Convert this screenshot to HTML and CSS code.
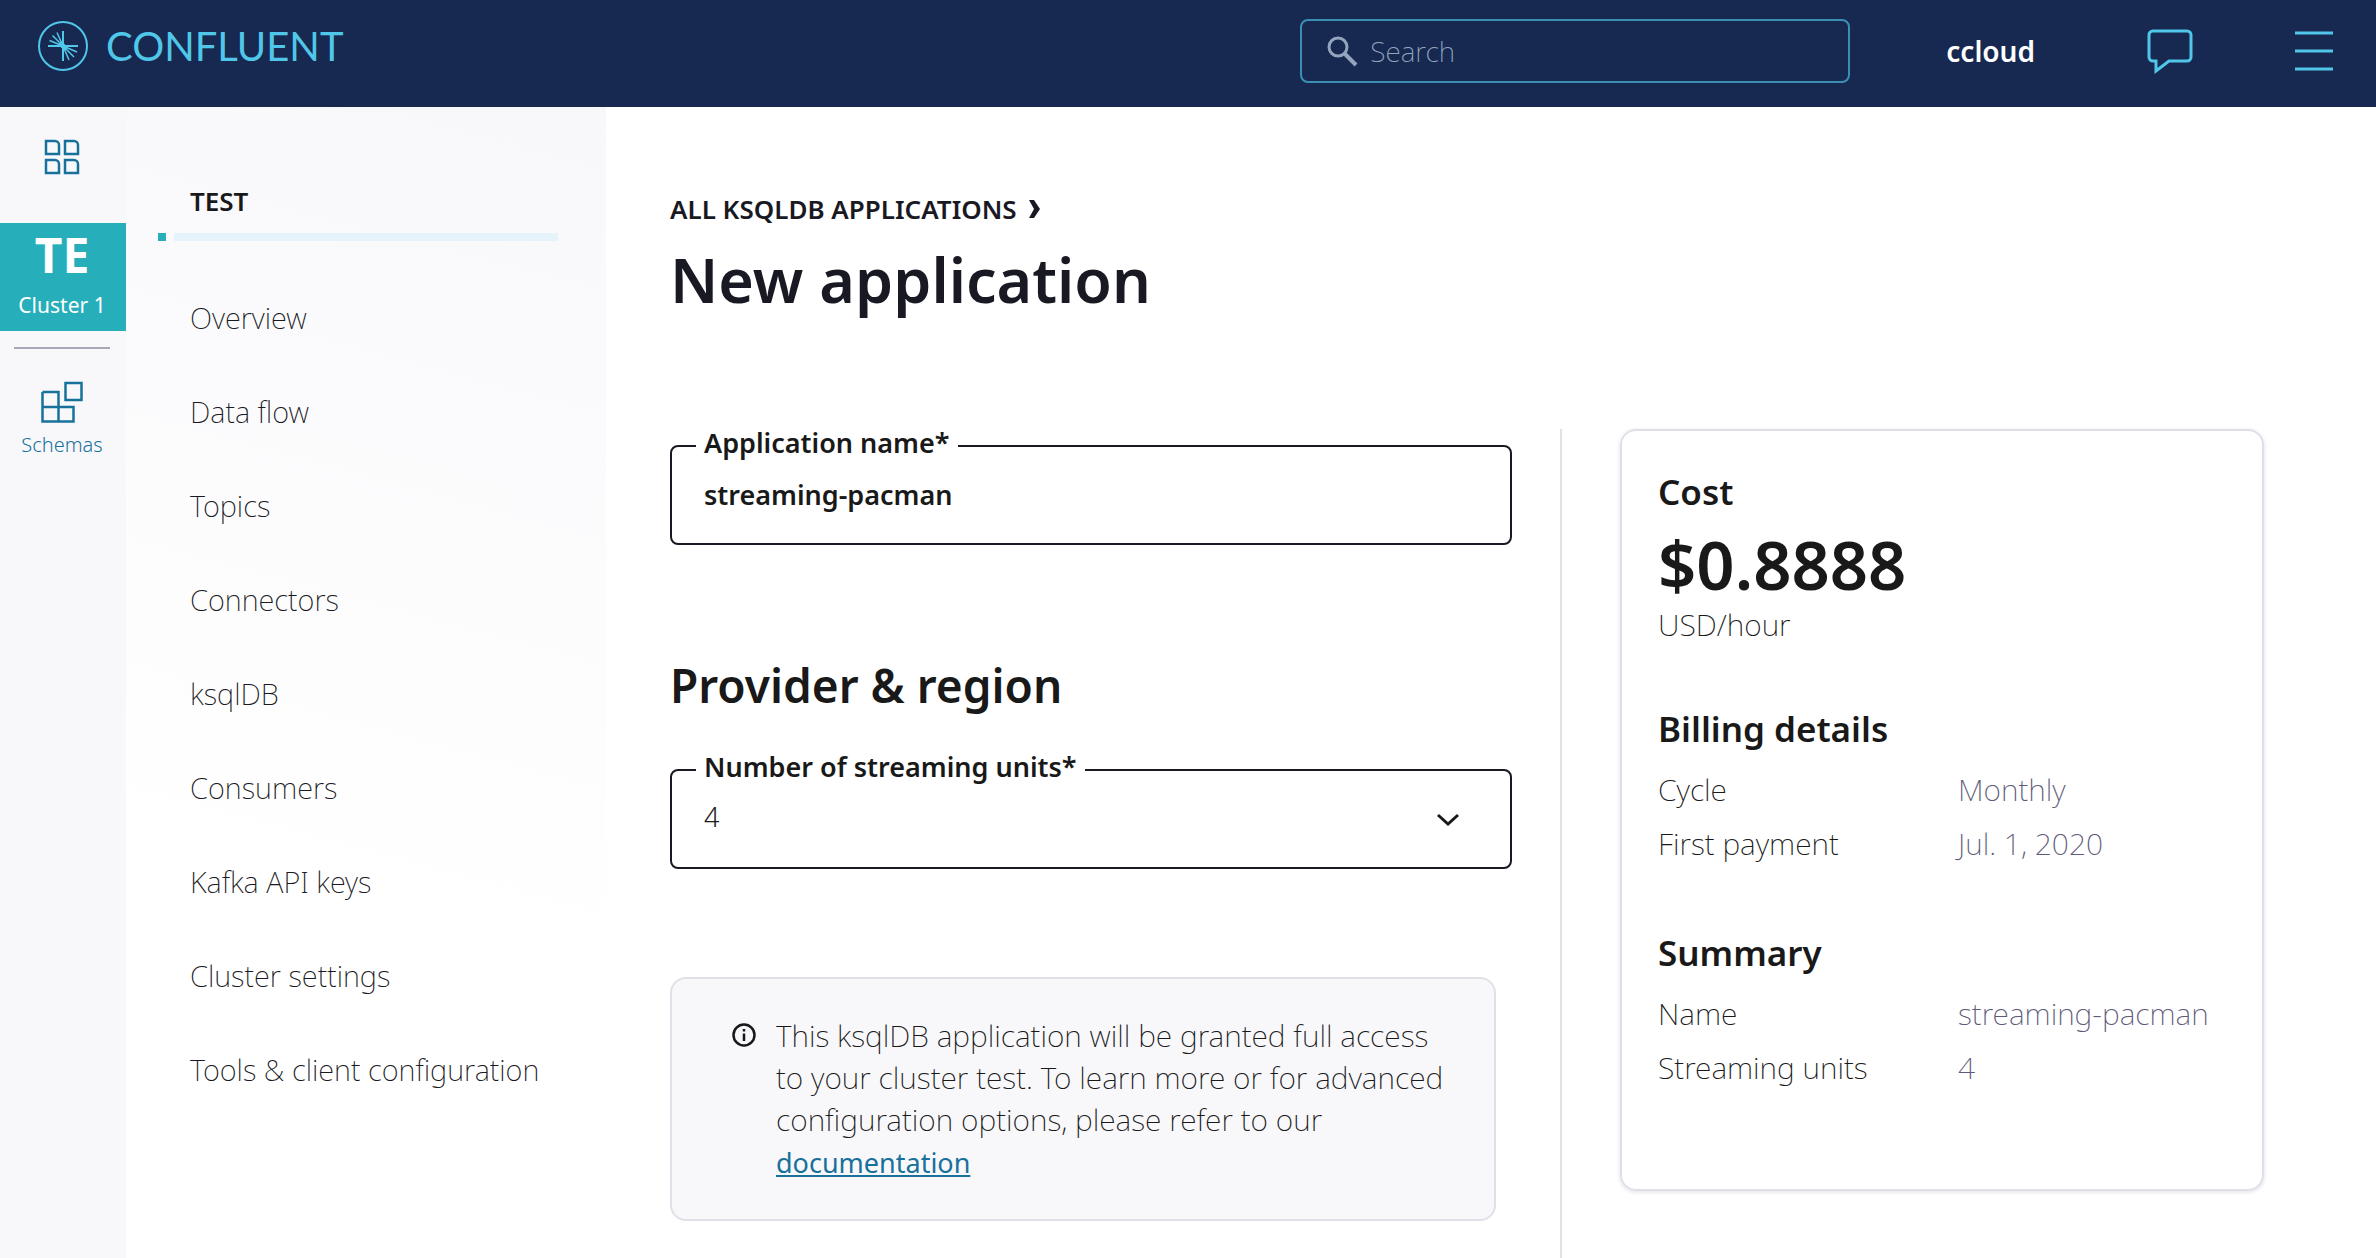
FILE: index.html
```html
<!DOCTYPE html>
<html lang="en">
<head>
<meta charset="utf-8">
<title>New application</title>
<link rel="stylesheet" href="styles.css">
</head>
<body>
<header class="topbar">
  <a class="brand" href="#">
    <svg class="brand-mark" viewBox="0 0 50 50" fill="none" stroke="currentColor" stroke-width="2" aria-hidden="true">
      <circle cx="25" cy="25" r="24"/>
      <path d="M25 10v30M10 25h30"/>
      <path d="M25 25L19 11.500M25 25L14.500 14.500M25 25L11.500 19.500M25 25L31 39M25 25L36 36M25 25L39 31" stroke-width="1.500"/>
      <path d="M22 22L28 28" stroke-width="5"/>
    </svg>
    <span class="brand-name">CONFLUENT</span>
  </a>
  <label class="search">
    <svg class="search-icon" viewBox="0 0 32 32" fill="none" stroke="currentColor" stroke-width="3" aria-hidden="true"><circle cx="12" cy="12" r="9"/><path d="M18.500 18.500L30 30" stroke-width="4"/></svg>
    <input class="search-input" type="search" placeholder="Search" aria-label="Search">
  </label>
  <a class="account" href="#">ccloud</a>
  <button class="icon-button chat" type="button" aria-label="Chat">
    <svg viewBox="0 0 46 46" width="46" height="46" fill="none" stroke="currentColor" stroke-width="3"><path d="M6 3h34a4 4 0 0 1 4 4v22a4 4 0 0 1-4 4H22L9 43V33H6a4 4 0 0 1-4-4V7a4 4 0 0 1 4-4z"/></svg>
  </button>
  <button class="icon-button menu-toggle" type="button" aria-label="Menu">
    <svg viewBox="0 0 38 40" width="38" height="40" fill="none" stroke="currentColor" stroke-width="3"><path d="M0 2h38M0 20h38M0 38h38"/></svg>
  </button>
</header>
<div class="layout">
  <nav class="rail" aria-label="Environment">
    <a class="rail-home" href="#" aria-label="Home">
      <svg viewBox="0 0 36 36" width="36" height="36" fill="none" stroke="currentColor" stroke-width="2.500"><path d="M2 2h9a4 4 0 0 1 4 4v9H2zM21 2h9a4 4 0 0 1 4 4v9H21zM2 21h9a4 4 0 0 1 4 4v9H2zM21 21h9a4 4 0 0 1 4 4v9H21z"/></svg>
    </a>
    <a class="rail-cluster" href="#"><span class="rail-initials">TE</span><span>Cluster 1</span></a>
    <hr class="rail-divider">
    <a class="rail-schemas" href="#">
      <svg viewBox="0 0 42 42" width="42" height="42" fill="none" stroke="currentColor" stroke-width="2.500"><path d="M1.500 11h16v29.500M1.500 26h31v14.500h-31V11M24.500 2h16v17h-16z"/></svg>
      <span>Schemas</span>
    </a>
  </nav>
  <nav class="sidebar" aria-label="Cluster">
    <h2 class="sidebar-title">TEST</h2>
    <div class="progress"><span class="progress-dot"></span><span class="progress-track"></span></div>
    <ul class="menu">
      <li><a href="#">Overview</a></li>
      <li><a href="#">Data flow</a></li>
      <li><a href="#">Topics</a></li>
      <li><a href="#">Connectors</a></li>
      <li><a href="#">ksqlDB</a></li>
      <li><a href="#">Consumers</a></li>
      <li><a href="#">Kafka API keys</a></li>
      <li><a href="#">Cluster settings</a></li>
      <li><a href="#">Tools &amp; client configuration</a></li>
    </ul>
  </nav>
  <main class="content">
    <a class="crumb" href="#">ALL KSQLDB APPLICATIONS
      <svg viewBox="0 0 12 18" width="12" height="18" fill="currentColor" aria-hidden="true"><path d="M0 0h5l6 9-6 9H0l5-9z"/></svg>
    </a>
    <h1 class="title">New application</h1>
    <div class="columns">
      <form class="form">
        <fieldset class="field">
          <legend><label for="app-name">Application name*</label></legend>
          <input id="app-name" class="control" type="text" value="streaming-pacman">
        </fieldset>
        <h2 class="section-title">Provider &amp; region</h2>
        <fieldset class="field">
          <legend><label for="units">Number of streaming units*</label></legend>
          <div class="select-row">
            <select id="units" class="control control-select"><option>4</option></select>
            <svg class="chevron" viewBox="0 0 24 14" width="24" height="14" fill="none" stroke="currentColor" stroke-width="3" aria-hidden="true"><path d="M2 2l10 9L22 2"/></svg>
          </div>
        </fieldset>
        <div class="notice">
          <svg class="notice-icon" viewBox="0 0 24 24" width="24" height="24" fill="none" stroke="currentColor" stroke-width="2.500" aria-hidden="true"><circle cx="12" cy="12" r="10.500"/><path d="M12 10.500V18M12 6v2.500"/></svg>
          <p class="notice-text">This ksqlDB application will be granted full access to your cluster test. To learn more or for advanced configuration options, please refer to our <a href="#">documentation</a></p>
        </div>
      </form>
      <aside class="aside">
        <section class="card">
          <h3>Cost</h3>
          <p class="price">$0.8888</p>
          <p class="unit">USD/hour</p>
          <h3>Billing details</h3>
          <dl class="facts">
            <dt>Cycle</dt><dd>Monthly</dd>
            <dt>First payment</dt><dd>Jul. 1, 2020</dd>
          </dl>
          <h3>Summary</h3>
          <dl class="facts">
            <dt>Name</dt><dd>streaming-pacman</dd>
            <dt>Streaming units</dt><dd>4</dd>
          </dl>
        </section>
      </aside>
    </div>
  </main>
</div>
</body>
</html>
```
FILE: styles.css
```css
* { box-sizing: border-box; }

body {
  margin: 0;
  min-height: 100vh;
  display: flex;
  flex-direction: column;
  font-family: "Noto Sans", "Open Sans", sans-serif;
  font-size: 28px;
  font-weight: 300;
  line-height: 42px;
  color: #191919;
  background: #fff;
}

h1, h2, h3, p, ul, dl, dd { margin: 0; padding: 0; }
a { color: inherit; text-decoration: none; }
svg { display: block; flex: none; }
input, select, button { font: inherit; color: inherit; }

.topbar {
  display: flex;
  align-items: center;
  height: 107px;
  padding: 0 43px 5px 38px;
  background: #172950;
  color: #50c6e8;
}
.brand { display: flex; align-items: center; gap: 18px; margin-right: auto; padding-bottom: 10px; }
.brand-mark { width: 50px; height: 50px; }
.brand-name { font-family: Lato, sans-serif; font-size: 40px; font-weight: 400; }

.search {
  display: flex;
  align-items: center;
  gap: 12px;
  width: 550px;
  height: 64px;
  padding: 0 24px;
  border: 2px solid #3a8fb3;
  border-radius: 8px;
  color: #92a5bd;
}
.search-icon { width: 32px; height: 32px; }
.search-input { flex: 1; min-width: 0; padding: 0; border: 0; outline: 0; background: none; font-weight: 200; }
.search-input::placeholder { color: #92a5bd; opacity: 1; }
.account { margin-left: 96px; font-size: 28px; font-weight: 600; color: #fff; }
.icon-button { padding: 0; border: 0; background: none; color: #50c6e8; }
.chat { margin-left: 112px; }
.menu-toggle { margin-left: 102px; }

.layout { flex: 1; display: flex; }

.rail { width: 126px; background: #f8f8fb; font-size: 20px; line-height: 28px; color: #17719b; text-align: center; }
.rail a { display: flex; flex-direction: column; align-items: center; padding-right: 2px; }
.rail .rail-home { padding-top: 32px; padding-bottom: 48px; }
.rail-cluster { height: 108px; background: #26afba; color: #fff; font-size: 21px; font-weight: 400; }
.rail-initials { margin-bottom: 4px; font-size: 48px; font-weight: 700; line-height: 64px; }
.rail-divider { margin: 16px 16px 32px 14px; border: 0; border-top: 2px solid #a9a6b8; }
.rail-schemas { gap: 8px; }

.sidebar {
  width: 480px;
  padding: 72px 48px 0 32px;
  background: linear-gradient(195deg, #f8f8fb 0%, #fff 68%);
}
.sidebar-title { padding-left: 32px; font-size: 26px; font-weight: 600; line-height: 44px; }
.progress { display: flex; gap: 8px; margin-top: 10px; }
.progress-dot { width: 8px; height: 8px; background: #26afba; }
.progress-track { flex: 1; height: 8px; background: #e5f4fb; }
.menu { display: grid; gap: 52px; margin-top: 56px; padding-left: 32px; list-style: none; font-size: 29px; font-weight: 200; color: #191924; white-space: nowrap; }

.content { flex: 1; display: flex; flex-direction: column; min-width: 0; padding: 82px 112px 0 64px; }
.crumb { display: flex; align-items: center; gap: 12px; font-size: 26px; font-weight: 600; line-height: 40px; color: #191924; }
.title { margin-top: 9px; font-size: 61px; font-weight: 600; line-height: 84px; color: #191924; }
.columns { flex: 1; display: grid; grid-template-columns: 421fr 352fr; gap: 48px; margin-top: 107px; }

.field { min-width: 0; height: 116px; margin: 0; padding: 0 32px; border: 2px solid #191924; border-radius: 8px; font-size: 27px; }
.field legend { margin-left: -8px; padding: 0 8px 6px; font-weight: 600; line-height: 28px; }
.control { display: block; width: 100%; height: 52px; margin-top: 5px; padding: 0; border: 0; outline: 0; background: none; font-weight: 600; }
.select-row { display: flex; align-items: center; margin-top: 4px; padding-right: 18px; }
.control-select { appearance: none; margin-top: 0; font-weight: 300; }
.chevron { margin-top: 6px; }
.section-title { margin: 106px 0 34px; font-size: 46px; font-weight: 600; line-height: 68px; }
.notice { display: flex; gap: 20px; margin: 108px 16px 0 0; padding: 36px 40px 36px 60px; border: 2px solid #e0e0e8; border-radius: 16px; background: #f8f8fb; }
.notice-icon { margin-top: 8px; }
.notice-text { font-size: 30px; font-weight: 200; }
.notice-text a { font-size: 27px; font-weight: 400; line-height: 36px; color: #17719b; text-decoration: underline; }

.aside { padding-left: 58px; border-left: 2px solid #e0e0e8; }
.card { min-height: 762px; padding: 39px 36px; border: 2px solid #dfdfe8; border-radius: 16px; box-shadow: 0 1px 4px #dfdfe8; }
.card h3 { font-size: 35px; font-weight: 600; line-height: 44px; }
.price { margin-top: 10px; font-size: 67px; font-weight: 600; line-height: 80px; }
.unit { margin-bottom: 61px; font-size: 30px; font-weight: 200; }
.facts { display: grid; grid-template-columns: 300px 1fr; gap: 12px 0; margin: 18px 0 66px; font-size: 30px; font-weight: 200; }
.facts:last-child { margin-bottom: 0; }
.facts dd { color: #5e5a78; white-space: nowrap; }
```
